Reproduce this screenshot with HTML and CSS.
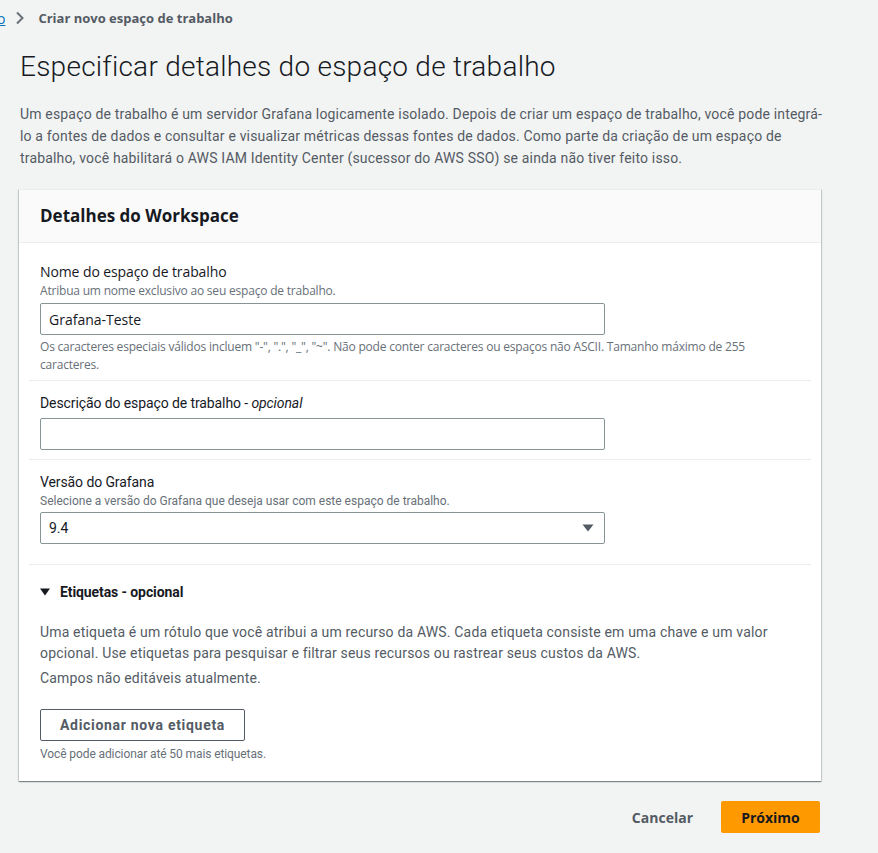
FILE: index.html
```html
<!DOCTYPE html>
<html lang="pt-BR">
<head>
<meta charset="utf-8">
<title>Criar novo espaço de trabalho</title>
<link rel="stylesheet" href="styles.css">
</head>
<body>
<nav class="crumbs">
  <a class="crumb-link" href="#">o</a>
  <svg class="chev" width="10" height="14" viewBox="0 0 10 14"><path d="M2 1.5 L7.5 7 L2 12.5" fill="none" stroke="#687078" stroke-width="2"/></svg>
  <span class="crumb-current">Criar novo espaço de trabalho</span>
</nav>
<main class="page">
  <h1 class="title">Especificar detalhes do espaço de trabalho</h1>
  <p class="intro">Um espaço de trabalho é um servidor Grafana logicamente isolado. Depois de criar um espaço de trabalho, você pode integrá-lo a fontes de dados e consultar e visualizar métricas dessas fontes de dados. Como parte da criação de um espaço de trabalho, você habilitará o AWS IAM Identity Center (sucessor do AWS SSO) se ainda não tiver feito isso.</p>

  <section class="card">
    <header class="card-head"><h2>Detalhes do Workspace</h2></header>
    <div class="card-body">
      <div class="field field-first">
        <div class="label sans">Nome do espaço de trabalho</div>
        <div class="desc sans">Atribua um nome exclusivo ao seu espaço de trabalho.</div>
        <div class="input sans">Grafana-Teste</div>
        <div class="constraint sans">Os caracteres especiais válidos incluem "-", ".", "_", "~". Não pode conter caracteres ou espaços não ASCII. Tamanho máximo de 255 caracteres.</div>
      </div>
      <div class="field">
        <div class="label">Descrição do espaço de trabalho - <i>opcional</i></div>
        <div class="input input-gap"></div>
      </div>
      <div class="field field-last">
        <div class="label">Versão do Grafana</div>
        <div class="desc">Selecione a versão do Grafana que deseja usar com este espaço de trabalho.</div>
        <div class="input select">
          <span>9.4</span>
          <svg width="12" height="8" viewBox="0 0 12 8"><path d="M0.5 0.5 H11.5 L6 7.5 Z" fill="#545b64"/></svg>
        </div>
      </div>
      <div class="tags">
        <div class="tags-head">
          <svg width="10" height="8" viewBox="0 0 10 8"><path d="M0 0.5 H10 L5 7.5 Z" fill="#16191f"/></svg>
          <span>Etiquetas - opcional</span>
        </div>
        <p class="tags-text">Uma etiqueta é um rótulo que você atribui a um recurso da AWS. Cada etiqueta consiste em uma chave e um valor opcional. Use etiquetas para pesquisar e filtrar seus recursos ou rastrear seus custos da AWS.</p>
        <p class="tags-note">Campos não editáveis atualmente.</p>
        <button class="btn-normal">Adicionar nova etiqueta</button>
        <div class="tags-limit">Você pode adicionar até 50 mais etiquetas.</div>
      </div>
    </div>
  </section>

  <div class="actions">
    <button class="btn-link">Cancelar</button>
    <button class="btn-primary">Próximo</button>
  </div>
</main>
</body>
</html>
```

FILE: styles.css
```css
* { box-sizing: border-box; }
html, body { margin: 0; padding: 0; }
body {
  background: #f2f3f3;
  font-family: Roboto, "Liberation Sans", sans-serif;
  color: #16191f;
  width: 878px;
  height: 853px;
  overflow: hidden;
}
.sans { font-family: "Open Sans", "Noto Sans", sans-serif; }

.crumbs {
  display: flex;
  align-items: center;
  height: 36px;
  font-family: "Open Sans", sans-serif;
  font-size: 13px;
}
.crumb-link {
  color: #0073bb;
  text-decoration: underline;
  margin-left: -3px;
  font-size: 14px;
}
.chev { margin-left: 10px; margin-right: 13px; }
.crumb-current { color: #545b64; font-weight: 700; }

.page { padding: 0 20px; width: 841px; }

.title {
  margin: 13px 0 0;
  font-size: 28px;
  line-height: 36px;
  font-weight: 300;
  letter-spacing: 0.25px;
  color: #16191f;
}
.intro {
  margin: 18px 0 0;
  font-size: 14px;
  line-height: 22px;
  color: #545b64;
  letter-spacing: 0.17px;
  width: 805px;
}

.card {
  margin-top: 20px;
  margin-left: -1px;
  width: 802px;
  background: #fff;
  border-top: 1px solid #eaeded;
  box-shadow: 0 1px 1px 0 rgba(0,28,36,0.3), 1px 1px 1px 0 rgba(0,28,36,0.15), -1px 1px 1px 0 rgba(0,28,36,0.15);
}
.card-head {
  background: #fafafa;
  border-bottom: 1px solid #eaeded;
  height: 53px;
  display: flex;
  align-items: center;
  padding: 0 21px;
}
.card-head h2 {
  margin: 0 0 2px;
  font-family: "Open Sans", sans-serif;
  font-size: 17px;
  font-weight: 700;
  color: #16191f;
}
.card-body { padding: 0 10px; }

.field {
  padding: 11px 11px 9px;
  border-bottom: 1px solid #eaeded;
}
.field-first { padding-top: 18px; padding-bottom: 6px; }
.field-last { padding-bottom: 20px; }

.label { font-size: 14px; line-height: 22px; color: #16191f; letter-spacing: -0.1px; }
.desc { font-size: 12px; line-height: 16px; color: #687078; }
.desc.sans { font-size: 12px; letter-spacing: -0.2px; }
.input {
  margin-top: 4px;
  width: 565px;
  height: 32px;
  border: 1px solid #879596;
  border-radius: 2px;
  padding: 0 8px;
  display: flex;
  align-items: center;
  font-size: 14px;
  color: #16191f;
  background: #fff;
}
.input-gap { margin-top: 4px; }
.select { justify-content: space-between; margin-top: 3px; padding-right: 10px; }
.constraint {
  margin-top: 3px;
  font-size: 12px;
  letter-spacing: -0.2px;
  line-height: 18px;
  color: #687078;
  width: 740px;
}

.tags { padding: 16px 11px 19px; }
.tags-head {
  display: flex;
  align-items: center;
  gap: 10px;
  font-size: 14px;
  line-height: 22px;
  font-weight: 700;
  letter-spacing: -0.1px;
}
.tags-text {
  margin: 19px 0 0;
  font-size: 14px;
  line-height: 21px;
  color: #545b64;
  letter-spacing: 0.17px;
}
.tags-note {
  margin: 3px 0 0;
  font-size: 14px;
  line-height: 22px;
  color: #545b64;
  letter-spacing: 0.17px;
}
.btn-normal {
  display: block;
  margin-top: 20px;
  height: 32px;
  width: 205px;
  background: #fff;
  border: 1px solid #545b64;
  border-radius: 2px;
  font-family: Roboto, sans-serif;
  font-weight: 700;
  font-size: 14px;
  color: #545b64;
  letter-spacing: 0.7px;
}
.tags-limit {
  margin-top: 5px;
  font-size: 12px;
  line-height: 16px;
  color: #687078;
  letter-spacing: -0.1px;
}

.actions {
  display: flex;
  justify-content: flex-end;
  align-items: center;
  margin-top: 20px;
  width: 800px;
  gap: 4px;
}
.btn-link, .btn-primary {
  font-family: "Open Sans", sans-serif;
  font-weight: 700;
  font-size: 14px;
  height: 32px;
  border-radius: 2px;
  border: none;
  cursor: pointer;
}
.btn-link { background: none; color: #545b64; padding: 0 24px; }
.btn-primary { background: #ff9900; color: #16191f; width: 99px; }
```
